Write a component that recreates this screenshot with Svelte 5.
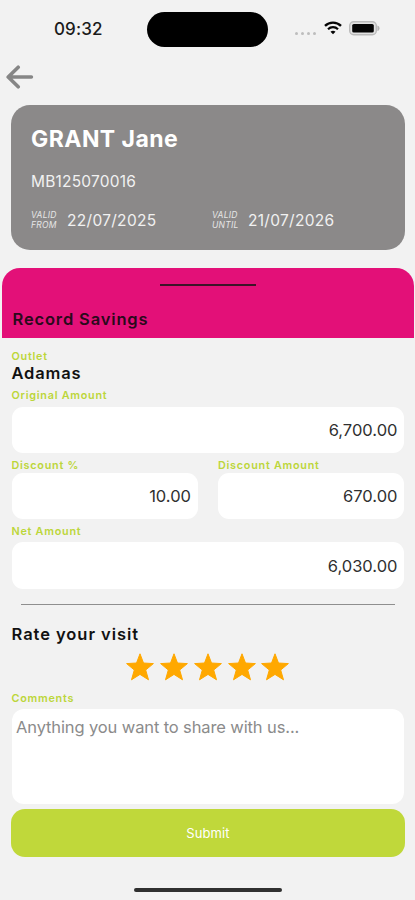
<script>
  let original = $state('6,700.00');
  let percent = $state('10.00');
  let discount = $state('670.00');
  let net = $state('6,030.00');
  let comments = $state('');
  let rating = $state(5);
</script>

<main class="screen">
  <header class="status">
    <span class="time">09:32</span>
    <span class="island"></span>
    <div class="indicators">
      <span class="dots"><i></i><i></i><i></i><i></i></span>
      <svg class="wifi" width="18" height="14" viewBox="0 0 18 14" fill="none" stroke="#050505">
        <path d="M1 4.9C5.4.5 12.6.5 17 4.9" stroke-width="2.3" />
        <path d="M4 8.2C6.8 5.5 11.2 5.5 14 8.2" stroke-width="2.2" />
        <path d="M9 13.2 6.5 10.7C7.9 9.4 10.1 9.4 11.5 10.7Z" fill="#050505" stroke="none" />
      </svg>
      <svg class="battery" width="31" height="15" viewBox="0 0 31 15">
        <rect x=".7" y=".7" width="26.6" height="13.1" rx="4" fill="#e2e2e2" stroke="#bbb" stroke-width="1.4" />
        <rect x="3.2" y="3" width="21.6" height="8.5" rx="1.6" fill="#050505" />
        <path d="M28.4 4.4c2.8.8 2.8 4.9 0 5.7Z" fill="#b5b5b5" />
      </svg>
    </div>
  </header>

  <nav>
    <button class="back" aria-label="Back">
      <svg width="28" height="24" viewBox="0 0 28 24" fill="none" stroke="#868686" stroke-width="3.6" stroke-linecap="round" stroke-linejoin="round">
        <path d="M12.2 2.2 2.2 12l10 9.8M2.8 12h22.6" />
      </svg>
    </button>
  </nav>

  <section class="card">
    <h1>GRANT Jane</h1>
    <p class="member">MB125070016</p>
    <div class="dates">
      <div class="date">
        <span class="tag">VALID<br />FROM</span>
        <span class="day">22/07/2025</span>
      </div>
      <div class="date">
        <span class="tag">VALID<br />UNTIL</span>
        <span class="day">21/07/2026</span>
      </div>
    </div>
  </section>

  <section class="sheet-head">
    <span class="grip"></span>
    <h2>Record Savings</h2>
  </section>

  <form class="form" onsubmit={(e) => e.preventDefault()}>
    <span class="label outlet-label">Outlet</span>
    <strong class="outlet">Adamas</strong>

    <label class="field original">
      <span class="label">Original Amount</span>
      <input bind:value={original} />
    </label>
    <div class="pair">
      <label class="field">
        <span class="label">Discount %</span>
        <input bind:value={percent} />
      </label>
      <label class="field">
        <span class="label">Discount Amount</span>
        <input bind:value={discount} />
      </label>
    </div>
    <label class="field net">
      <span class="label">Net Amount</span>
      <input bind:value={net} />
    </label>

    <hr />
    <h3>Rate your visit</h3>
    <div class="stars">
      {#each [1, 2, 3, 4, 5] as n}
        <button type="button" aria-label="{n} stars" onclick={() => (rating = n)}>
          <svg width="28" height="28" viewBox="0 0 28 28" fill={n <= rating ? '#ffa800' : '#d0d0d0'} stroke={n <= rating ? '#ffa800' : '#d0d0d0'} stroke-width="1" stroke-linejoin="round">
            <path d="M14 .8 17.5 10 27.4 10.6 19.7 17 22.5 26.8 14 21.4 5.5 26.8 8.3 17 .6 10.6 10.5 10Z" />
          </svg>
        </button>
      {/each}
    </div>

    <label class="field comments">
      <span class="label">Comments</span>
      <textarea bind:value={comments} placeholder="Anything you want to share with us..."></textarea>
    </label>
    <button class="submit">Submit</button>
  </form>

  <footer><span></span></footer>
</main>

<style>
  :global(body) {
    background: #f2f2f2;
  }
  * {
    box-sizing: border-box;
    margin: 0;
  }
  .screen {
    width: 415px;
    height: 900px;
    overflow: hidden;
    display: flex;
    flex-direction: column;
    background: #f2f2f2;
    color: #111;
    font-family: Inter, 'Liberation Sans', sans-serif;
  }
  button {
    border: 0;
    padding: 0;
    background: none;
    font: inherit;
  }
  svg {
    display: block;
  }
  .status {
    height: 58px;
    flex: none;
    display: grid;
    grid-template-columns: 147.4px 121px 1fr;
    align-items: center;
  }
  .time {
    padding-left: 54px;
    font-size: 17px;
    font-weight: 500;
    letter-spacing: 0.1px;
    color: #1b1b1b;
  }
  .island {
    height: 35px;
    border-radius: 18px;
    background: #000;
  }
  .indicators {
    display: flex;
    align-items: center;
    padding: 0 0 2px 26.6px;
  }
  .dots {
    display: flex;
    gap: 3px;
    padding-top: 10px;
    margin-right: 8px;
  }
  .dots i {
    width: 3px;
    height: 3px;
    border-radius: 50%;
    background: #bdbdbd;
  }
  .battery {
    margin: 1px 0 0 7px;
  }
  nav {
    height: 46.5px;
    flex: none;
    padding: 7px 0 0 6px;
  }
  .card {
    height: 145.5px;
    flex: none;
    margin: 0 10px 0 11px;
    padding: 20px 20px 0;
    border-radius: 19px;
    background: #8b8989;
    color: #fff;
  }
  h1 {
    font-size: 23px;
    line-height: 28px;
    font-weight: 700;
    letter-spacing: 0.45px;
  }
  .member {
    margin-top: 19px;
    font-size: 15.5px;
    line-height: 20px;
    letter-spacing: 0.2px;
    color: #f1f1f1;
  }
  .dates {
    display: flex;
    margin-top: 18.5px;
  }
  .date {
    display: flex;
    align-items: center;
    width: 181px;
    height: 20px;
    flex: none;
  }
  .tag {
    width: 36px;
    font-size: 8.5px;
    line-height: 10px;
    font-style: italic;
    letter-spacing: 0.25px;
    color: #e6e6e6;
  }
  .day {
    font-size: 15.5px;
    letter-spacing: 0.3px;
    color: #f1f1f1;
    white-space: nowrap;
  }
  .sheet-head {
    height: 70px;
    flex: none;
    display: flex;
    flex-direction: column;
    margin: 18px 1.5px 0 2px;
    padding: 15.5px 0 0 10.5px;
    border-radius: 18px 18px 0 0;
    background: #e31078;
  }
  .grip {
    width: 96px;
    height: 2.5px;
    margin-left: 147.5px;
    background: #3d1428;
  }
  h2 {
    margin-top: 22px;
    font-size: 16.5px;
    line-height: 22px;
    font-weight: 600;
    letter-spacing: 0.85px;
    color: #2a0a1b;
  }
  .form {
    display: flex;
    flex-direction: column;
    padding: 0 11px 0 11.5px;
  }
  .label {
    display: block;
    height: 14px;
    font-size: 10.8px;
    line-height: 15px;
    font-weight: 600;
    letter-spacing: 0.75px;
    color: #bcd63a;
    white-space: nowrap;
  }
  .outlet-label {
    margin-top: 11px;
  }
  .outlet {
    height: 20px;
    font-size: 16.5px;
    line-height: 20px;
    font-weight: 600;
    letter-spacing: 0.85px;
  }
  .field {
    display: flex;
    flex-direction: column;
  }
  input,
  textarea {
    width: 100%;
    border: 0;
    outline: 0;
    border-radius: 11px;
    background: #fff;
    color: #303030;
    font-family: inherit;
  }
  input {
    height: 46px;
    padding: 0 6.5px;
    text-align: right;
    font-size: 16.5px;
    letter-spacing: 0;
  }
  .original {
    margin-top: 5px;
  }
  .original .label {
    height: 18.7px;
  }
  .pair {
    display: grid;
    grid-template-columns: 186px 186px;
    justify-content: space-between;
    margin-top: 5.3px;
  }
  .pair .label {
    height: 15px;
  }
  .net {
    margin-top: 5.5px;
  }
  .net .label {
    height: 17.5px;
  }
  .net input {
    height: 47.5px;
  }
  hr {
    height: 1.5px;
    border: 0;
    margin: 14.5px 9px 0;
    background: #8f8f8f;
  }
  h3 {
    margin-top: 17.5px;
    font-size: 16.5px;
    line-height: 22px;
    font-weight: 600;
    letter-spacing: 0.95px;
  }
  .stars {
    display: flex;
    justify-content: center;
    gap: 5.8px;
    margin-top: 7.8px;
  }
  .comments {
    margin-top: 10.4px;
  }
  .comments .label {
    height: 18px;
  }
  textarea {
    height: 95px;
    resize: none;
    padding: 7px 4.5px;
    border-radius: 12px;
    font-size: 16.5px;
    line-height: 22px;
    letter-spacing: -0.12px;
  }
  textarea::placeholder {
    color: #8b8b8b;
    opacity: 1;
  }
  .submit {
    height: 48px;
    margin: 5px -1px 0 -0.5px;
    border-radius: 14px;
    background: #c0d83a;
    color: #fff;
    font-size: 13px;
    letter-spacing: 0.1px;
  }
  footer {
    display: flex;
    justify-content: center;
    padding-top: 31px;
  }
  footer span {
    width: 148px;
    height: 4px;
    border-radius: 2px;
    background: #303030;
  }
</style>
